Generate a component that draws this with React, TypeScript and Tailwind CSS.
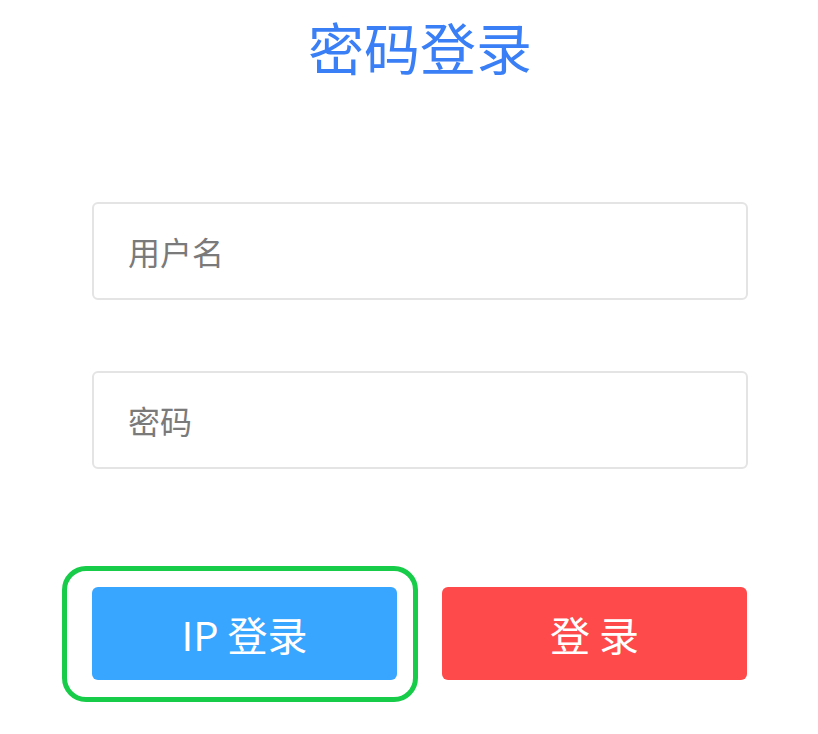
export default function App() {
  return (
    <div
      className="w-[818px] h-[734px] bg-white overflow-hidden"
      style={{ fontFamily: '"Noto Sans CJK SC", "Liberation Sans", sans-serif' }}
    >
      <div className="ml-[92px] w-[656px] pt-[11px]">
        <h1 className="text-center text-[56px] leading-[70px] text-[#3a7ff6] font-normal">密码登录</h1>

        <div className="mt-[121px] flex flex-col gap-[71px]">
          <input
            placeholder="用户名"
            className="h-[98px] w-full rounded-[6px] border-2 border-[#e4e4e4] px-[34px] text-[32px] text-[#555] placeholder:text-[#7a7a7a] outline-none"
          />
          <input
            type="password"
            placeholder="密码"
            className="h-[98px] w-full rounded-[6px] border-2 border-[#e4e4e4] px-[34px] text-[32px] text-[#555] placeholder:text-[#7a7a7a] outline-none"
          />
        </div>

        <div className="mt-[118px] flex gap-[45px]">
          <div className="relative">
            <button className="h-[93px] w-[305px] rounded-[6px] bg-[#38a5ff] text-[40px] text-white">
              IP 登录
            </button>
            <div className="absolute -left-[30px] -top-[21px] w-[356px] h-[136px] rounded-[24px] border-[5px] border-[#16cc48] pointer-events-none" />
          </div>
          <button className="h-[93px] w-[305px] rounded-[6px] bg-[#ff4a4b] text-[40px] text-white">
            登 录
          </button>
        </div>
      </div>
    </div>
  );
}
